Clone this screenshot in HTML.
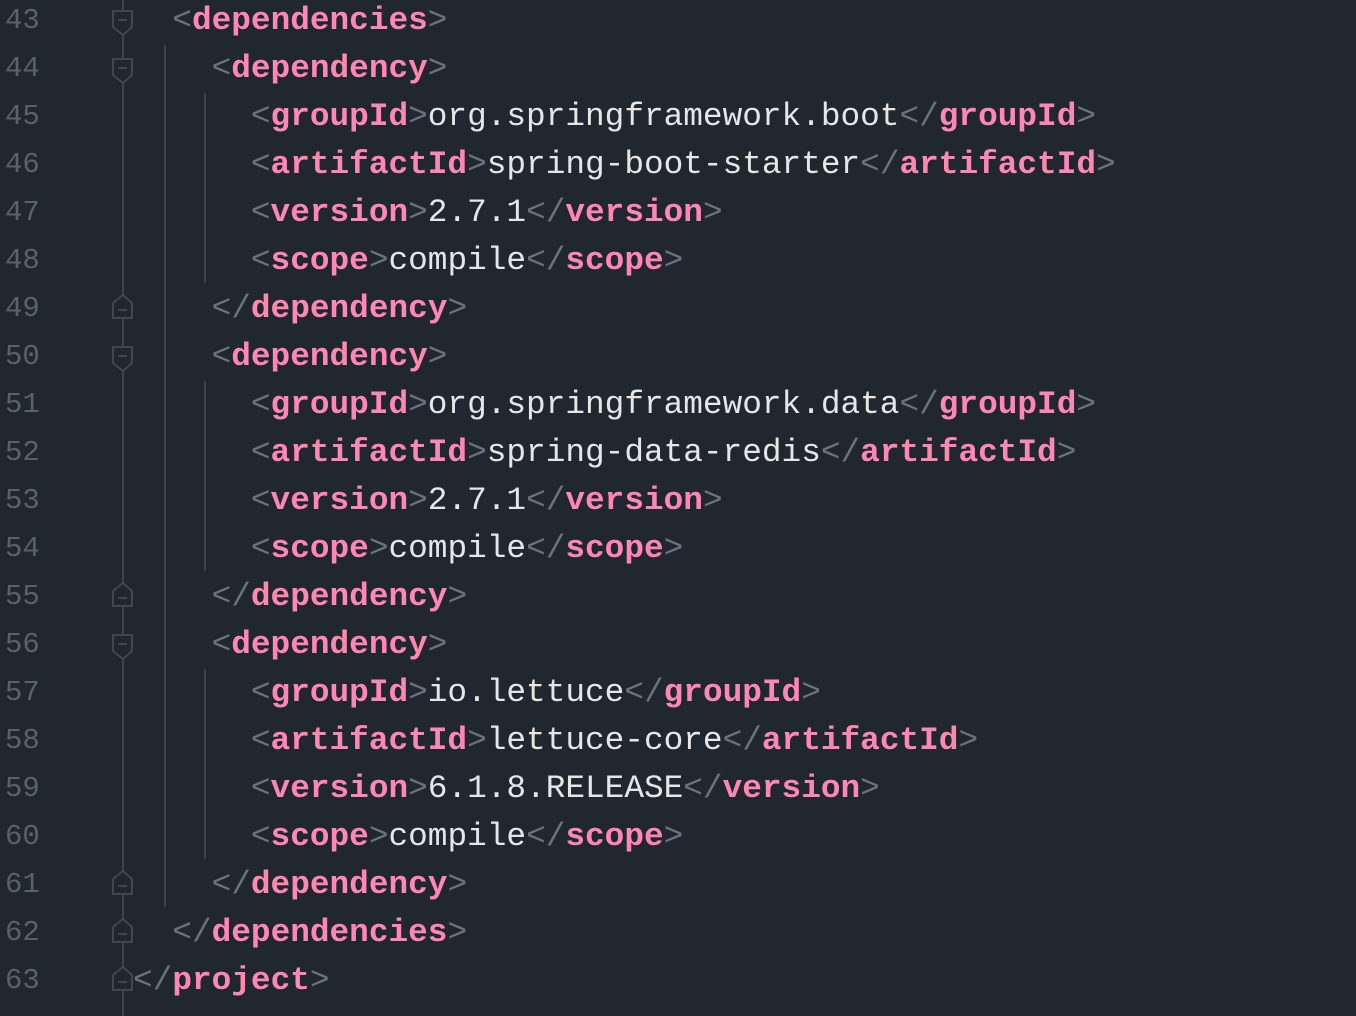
<!DOCTYPE html>
<html><head><meta charset="utf-8"><style>
html,body{margin:0;padding:0;background:#21272f;width:1356px;height:1016px;overflow:hidden}
.ln{position:absolute;left:5px;font:29px/48px "Liberation Mono",monospace;color:#58626d}
.c{position:absolute;left:133px;font:32.75px/48px "Liberation Mono",monospace;color:#e6e6e6;white-space:pre}
.b{color:#69737e}
.t{color:#ff87b2;font-weight:bold}
svg{position:absolute;left:0;top:0}
</style></head><body>
<svg width="1356" height="1016">
<g stroke="#3b434d" stroke-width="2" fill="#21272f">
<line x1="123" y1="0" x2="123" y2="1016"/>
<line x1="165" y1="45" x2="165" y2="907"/>
<line x1="205" y1="93" x2="205" y2="283"/>
<line x1="205" y1="381" x2="205" y2="571"/>
<line x1="205" y1="669" x2="205" y2="859"/>
</g>
<g stroke="#3f4852" stroke-width="2" fill="#21272f" id="icons"></g>
</svg>
<div id="code"></div>
<script>
var L=[
[43,1,'<span class="b">&lt;</span><span class="t">dependencies</span><span class="b">&gt;</span>','d'],
[44,2,'<span class="b">&lt;</span><span class="t">dependency</span><span class="b">&gt;</span>','d'],
[45,3,'<span class="b">&lt;</span><span class="t">groupId</span><span class="b">&gt;</span>org.springframework.boot<span class="b">&lt;/</span><span class="t">groupId</span><span class="b">&gt;</span>'],
[46,3,'<span class="b">&lt;</span><span class="t">artifactId</span><span class="b">&gt;</span>spring-boot-starter<span class="b">&lt;/</span><span class="t">artifactId</span><span class="b">&gt;</span>'],
[47,3,'<span class="b">&lt;</span><span class="t">version</span><span class="b">&gt;</span>2.7.1<span class="b">&lt;/</span><span class="t">version</span><span class="b">&gt;</span>'],
[48,3,'<span class="b">&lt;</span><span class="t">scope</span><span class="b">&gt;</span>compile<span class="b">&lt;/</span><span class="t">scope</span><span class="b">&gt;</span>'],
[49,2,'<span class="b">&lt;/</span><span class="t">dependency</span><span class="b">&gt;</span>','u'],
[50,2,'<span class="b">&lt;</span><span class="t">dependency</span><span class="b">&gt;</span>','d'],
[51,3,'<span class="b">&lt;</span><span class="t">groupId</span><span class="b">&gt;</span>org.springframework.data<span class="b">&lt;/</span><span class="t">groupId</span><span class="b">&gt;</span>'],
[52,3,'<span class="b">&lt;</span><span class="t">artifactId</span><span class="b">&gt;</span>spring-data-redis<span class="b">&lt;/</span><span class="t">artifactId</span><span class="b">&gt;</span>'],
[53,3,'<span class="b">&lt;</span><span class="t">version</span><span class="b">&gt;</span>2.7.1<span class="b">&lt;/</span><span class="t">version</span><span class="b">&gt;</span>'],
[54,3,'<span class="b">&lt;</span><span class="t">scope</span><span class="b">&gt;</span>compile<span class="b">&lt;/</span><span class="t">scope</span><span class="b">&gt;</span>'],
[55,2,'<span class="b">&lt;/</span><span class="t">dependency</span><span class="b">&gt;</span>','u'],
[56,2,'<span class="b">&lt;</span><span class="t">dependency</span><span class="b">&gt;</span>','d'],
[57,3,'<span class="b">&lt;</span><span class="t">groupId</span><span class="b">&gt;</span>io.lettuce<span class="b">&lt;/</span><span class="t">groupId</span><span class="b">&gt;</span>'],
[58,3,'<span class="b">&lt;</span><span class="t">artifactId</span><span class="b">&gt;</span>lettuce-core<span class="b">&lt;/</span><span class="t">artifactId</span><span class="b">&gt;</span>'],
[59,3,'<span class="b">&lt;</span><span class="t">version</span><span class="b">&gt;</span>6.1.8.RELEASE<span class="b">&lt;/</span><span class="t">version</span><span class="b">&gt;</span>'],
[60,3,'<span class="b">&lt;</span><span class="t">scope</span><span class="b">&gt;</span>compile<span class="b">&lt;/</span><span class="t">scope</span><span class="b">&gt;</span>'],
[61,2,'<span class="b">&lt;/</span><span class="t">dependency</span><span class="b">&gt;</span>','u'],
[62,1,'<span class="b">&lt;/</span><span class="t">dependencies</span><span class="b">&gt;</span>','u'],
[63,0,'<span class="b">&lt;/</span><span class="t">project</span><span class="b">&gt;</span>','u']
];
var h='',ic='';
L.forEach(function(r,i){
 var top=-3+48*i, cy=-6+48*i+24;
 h+='<div class="ln" style="top:'+top+'px">'+r[0]+'</div>';
 h+='<div class="c" style="top:'+top+'px;left:'+(133+r[1]*39.3)+'px">'+r[2]+'</div>';
 if(r[3]=='d') ic+='<path d="M113 '+(cy-7)+'H132V'+(cy+9)+'L123 '+(cy+17)+'L113 '+(cy+9)+'Z"/><line x1="118" y1="'+(cy+2)+'" x2="127" y2="'+(cy+2)+'"/>';
 if(r[3]=='u') ic+='<path d="M113 '+(cy+12)+'H132V'+(cy-3)+'L123 '+(cy-11)+'L113 '+(cy-3)+'Z"/><line x1="118" y1="'+(cy+4)+'" x2="127" y2="'+(cy+4)+'"/>';
});
document.getElementById('code').innerHTML=h;
document.getElementById('icons').innerHTML=ic;
</script>
</body></html>
